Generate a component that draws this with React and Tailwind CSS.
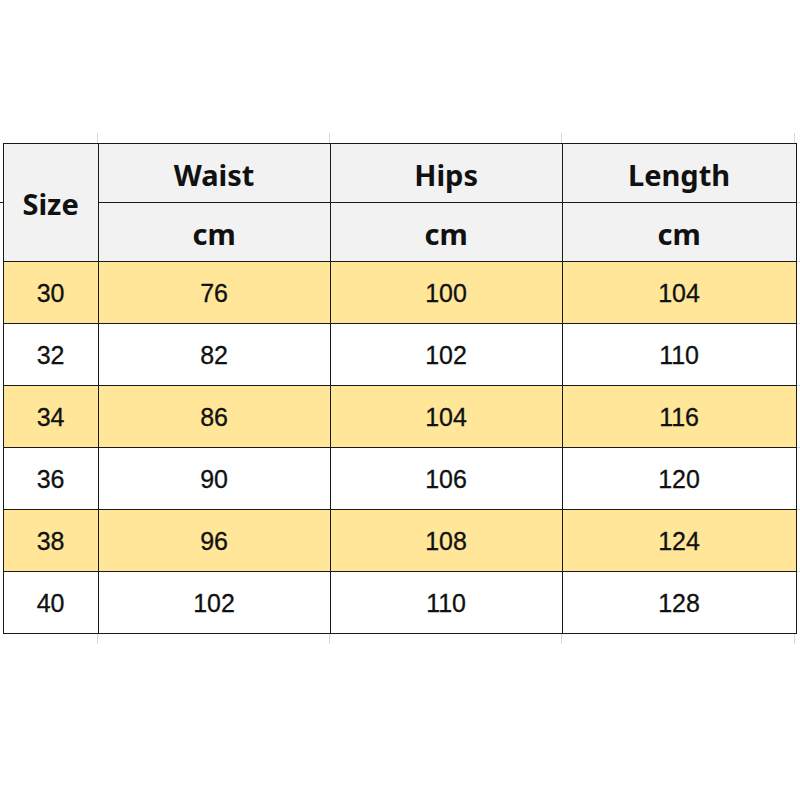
const rows = [
  ['30', '76', '100', '104'],
  ['32', '82', '102', '110'],
  ['34', '86', '104', '116'],
  ['36', '90', '106', '120'],
  ['38', '96', '108', '124'],
  ['40', '102', '110', '128'],
]

const head = "font-['Noto_Sans',sans-serif] font-bold text-[29px] text-[#111] pt-[3px]"
const cell = "border border-[#1a1a1a] text-center"

export default function App() {
  return (
    <div className="w-[800px] h-[800px] bg-white pt-[133px]">
      {/* faint sheet gridlines above */}
      <div className="flex h-[10px]">
        <div className="w-[98px] border-r border-[#d9d9d9]" />
        <div className="w-[232px] border-r border-[#d9d9d9]" />
        <div className="w-[232px] border-r border-[#d9d9d9]" />
        <div className="w-[233px] border-r border-[#d9d9d9]" />
      </div>
      <div className="flex">
        <div className="w-[3px] flex flex-col">
          <div className="h-[59px]" />
          <div className="h-[59px] border-t border-[#1a1a1a]" />
        </div>
        <table className="border-collapse table-fixed w-[793px]">
          <colgroup>
            <col className="w-[95px]" />
            <col className="w-[232px]" />
            <col className="w-[232px]" />
            <col className="w-[234px]" />
          </colgroup>
          <thead>
            <tr className="h-[59px] bg-[#f2f2f2]">
              <th rowSpan={2} className={`${cell} ${head}`}>Size</th>
              <th className={`${cell} ${head}`}>Waist</th>
              <th className={`${cell} ${head}`}>Hips</th>
              <th className={`${cell} ${head}`}>Length</th>
            </tr>
            <tr className="h-[59px] bg-[#f2f2f2]">
              <th className={`${cell} ${head}`}>cm</th>
              <th className={`${cell} ${head}`}>cm</th>
              <th className={`${cell} ${head}`}>cm</th>
            </tr>
          </thead>
          <tbody className="font-['Liberation_Sans',Arial,sans-serif] text-[25px] text-[#111] [-webkit-text-stroke:0.3px_#111]">
            {rows.map((r, i) => (
              <tr key={i} className={`h-[62px] ${i % 2 === 0 ? 'bg-[#ffe699]' : 'bg-white'}`}>
                {r.map((v, j) => (
                  <td key={j} className={`${cell} pt-[3px]`}>{v}</td>
                ))}
              </tr>
            ))}
          </tbody>
        </table>
        <div className="w-[4px] flex flex-col">
          <div className="h-[59px]" />
          <div className="h-[59px] border-t border-[#d9d9d9]" />
          {rows.map((_, i) => (
            <div key={i} className="h-[62px] border-t border-[#d9d9d9]" />
          ))}
        </div>
      </div>
      {/* faint sheet gridlines below */}
      <div className="flex h-[10px]">
        <div className="w-[98px] border-r border-[#d9d9d9]" />
        <div className="w-[232px] border-r border-[#d9d9d9]" />
        <div className="w-[232px] border-r border-[#d9d9d9]" />
        <div className="w-[233px] border-r border-[#d9d9d9]" />
      </div>
    </div>
  )
}
